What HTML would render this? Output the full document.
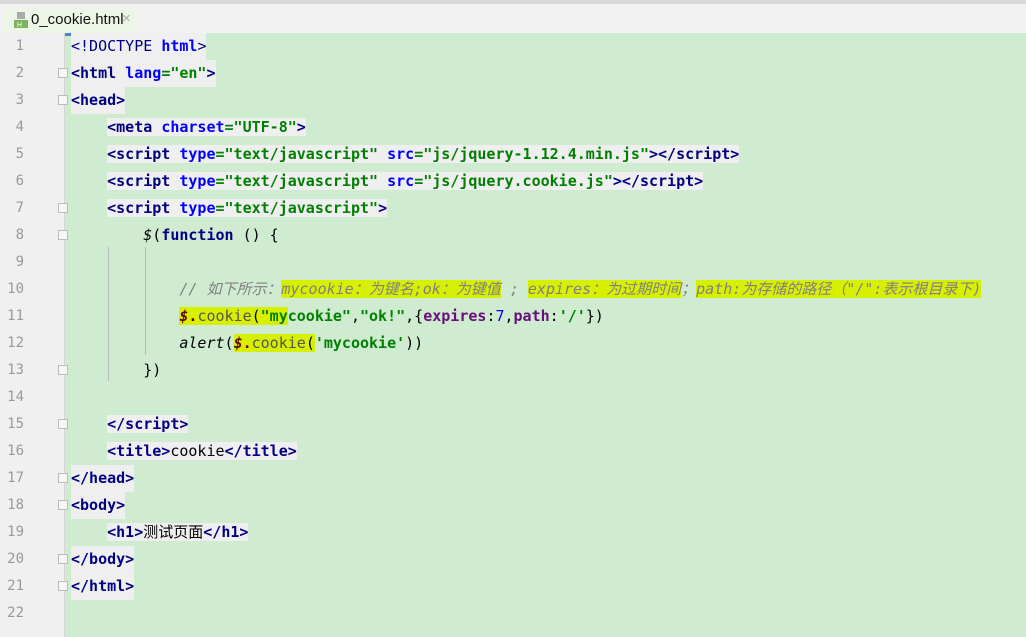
<!DOCTYPE html>
<html><head><meta charset="utf-8"><style>
body{margin:0;width:1026px;height:637px;overflow:hidden;background:#cfebd0;position:relative;font-family:"DejaVu Sans Mono","Liberation Mono","Noto Sans CJK SC",monospace;font-size:15px}
.tabbar{position:absolute;left:0;top:0;width:1026px;height:33px;background:#f2f2f2;border-top:4px solid #d9d9d9;box-sizing:border-box}
.tab{position:absolute;left:4px;top:4px;width:133px;height:25px;background:#edf6e6;border-bottom:3px solid #4a86c7;font-family:"Liberation Sans",sans-serif;font-size:15px;color:#111}
.gutter{position:absolute;left:0;top:33px;width:64px;height:604px;background:#f0f0f0;border-right:1px solid #d6d6d6}
.num{position:absolute;left:0;width:24px;text-align:right;color:#999;font-size:14px}
.ln{position:absolute;left:71px;height:27px;line-height:27px;white-space:pre;color:#000}
.g{background:#efefef}
.t{color:#000080;font-weight:bold}.a{color:#0000ff;font-weight:bold}.v{color:#008000;font-weight:bold}
.c{color:#808080;font-style:italic}.k{color:#000080;font-weight:bold}.p{color:#660e7a;font-weight:bold}.n{color:#0000ff}
.hl{background:#d6f000}
.fold{position:absolute;left:58px;width:8px;height:8px;border:1px solid #bbb;background:#f7f7f7}
.guide{position:absolute;width:1px;background:#bbb}
</style></head><body>
<div class="tabbar"><div class="tab"><svg style="position:absolute;left:10px;top:4px" width="14" height="16"><rect x="3" y="0" width="8" height="7" fill="#aaa"/><rect x="0" y="8" width="14" height="8" fill="#7bb35e"/><text x="3" y="15" font-size="7" fill="#fff" font-family="Liberation Sans">H</text></svg><span style="position:absolute;left:27px;top:3px">0_cookie.html</span><span style="position:absolute;left:118px;top:2px;color:#aaa">×</span></div></div>
<div class="gutter">
<div class="num" style="top:5px">1</div><div class="num" style="top:32px">2</div><div class="num" style="top:59px">3</div><div class="num" style="top:86px">4</div><div class="num" style="top:113px">5</div><div class="num" style="top:140px">6</div><div class="num" style="top:167px">7</div><div class="num" style="top:194px">8</div><div class="num" style="top:221px">9</div><div class="num" style="top:248px">10</div><div class="num" style="top:275px">11</div><div class="num" style="top:302px">12</div><div class="num" style="top:329px">13</div><div class="num" style="top:356px">14</div><div class="num" style="top:383px">15</div><div class="num" style="top:410px">16</div><div class="num" style="top:437px">17</div><div class="num" style="top:464px">18</div><div class="num" style="top:491px">19</div><div class="num" style="top:518px">20</div><div class="num" style="top:545px">21</div><div class="num" style="top:572px">22</div>
</div>
<div class="fold" style="top:68px"></div><div class="fold" style="top:95px"></div><div class="fold" style="top:203px"></div><div class="fold" style="top:230px"></div><div class="fold" style="top:365px"></div><div class="fold" style="top:419px"></div><div class="fold" style="top:473px"></div><div class="fold" style="top:500px"></div><div class="fold" style="top:554px"></div><div class="fold" style="top:581px"></div>
<div class="guide" style="left:108px;top:247px;height:134px"></div>
<div class="guide" style="left:145px;top:247px;height:108px"></div>
<div class="ln g" style="top:33px"><span style="color:#000080">&lt;!DOCTYPE </span><span class="a">html</span><span style="color:#000080">&gt;</span></div>
<div class="ln g" style="top:60px"><span class="t">&lt;html </span><span class="a">lang</span><span class="v">="en"</span><span class="t">&gt;</span></div>
<div class="ln g" style="top:87px"><span class="t">&lt;head&gt;</span></div>
<div class="ln" style="top:114px">    <span class="g"><span class="t">&lt;meta </span><span class="a">charset</span><span class="v">="UTF-8"</span><span class="t">&gt;</span></span></div>
<div class="ln" style="top:141px">    <span class="g"><span class="t">&lt;script </span><span class="a">type</span><span class="v">="text/javascript" </span><span class="a">src</span><span class="v">="js/jquery-1.12.4.min.js"</span><span class="t">&gt;&lt;/script&gt;</span></span></div>
<div class="ln" style="top:168px">    <span class="g"><span class="t">&lt;script </span><span class="a">type</span><span class="v">="text/javascript" </span><span class="a">src</span><span class="v">="js/jquery.cookie.js"</span><span class="t">&gt;&lt;/script&gt;</span></span></div>
<div class="ln" style="top:195px">    <span class="g"><span class="t">&lt;script </span><span class="a">type</span><span class="v">="text/javascript"</span><span class="t">&gt;</span></span></div>
<div class="ln" style="top:222px">        <i>$</i>(<span class="k">function</span> () {</div>
<div class="ln c" style="top:276px">            // 如下所示：<span class="hl">mycookie：为键名;ok：为键值</span> ; <span class="hl">expires：为过期时间</span>；<span class="hl">path:为存储的路径（"/":表示根目录下)</span></div>
<div class="ln" style="top:303px">            <span class="hl"><b style="color:#660000"><i>$</i>.</b><span style="color:#555">cookie</span>(<span class="v">"my</span></span><span class="v">cookie"</span>,<span class="v">"ok!"</span>,{<span class="p">expires</span>:<span class="n">7</span>,<span class="p">path</span>:<span class="v">'/'</span>})</div>
<div class="ln" style="top:330px">            <i>alert</i>(<span class="hl"><b style="color:#660000"><i>$</i>.</b><span style="color:#555">cookie</span>(</span><span class="v">'mycookie'</span>))</div>
<div class="ln" style="top:357px">        })</div>
<div class="ln" style="top:411px">    <span class="g"><span class="t">&lt;/script&gt;</span></span></div>
<div class="ln" style="top:438px">    <span class="g"><span class="t">&lt;title&gt;</span>cookie<span class="t">&lt;/title&gt;</span></span></div>
<div class="ln g" style="top:465px"><span class="t">&lt;/head&gt;</span></div>
<div class="ln g" style="top:492px"><span class="t">&lt;body&gt;</span></div>
<div class="ln" style="top:519px">    <span class="g"><span class="t">&lt;h1&gt;</span>测试页面<span class="t">&lt;/h1&gt;</span></span></div>
<div class="ln g" style="top:546px"><span class="t">&lt;/body&gt;</span></div>
<div class="ln g" style="top:573px"><span class="t">&lt;/html&gt;</span></div>
</body></html>
